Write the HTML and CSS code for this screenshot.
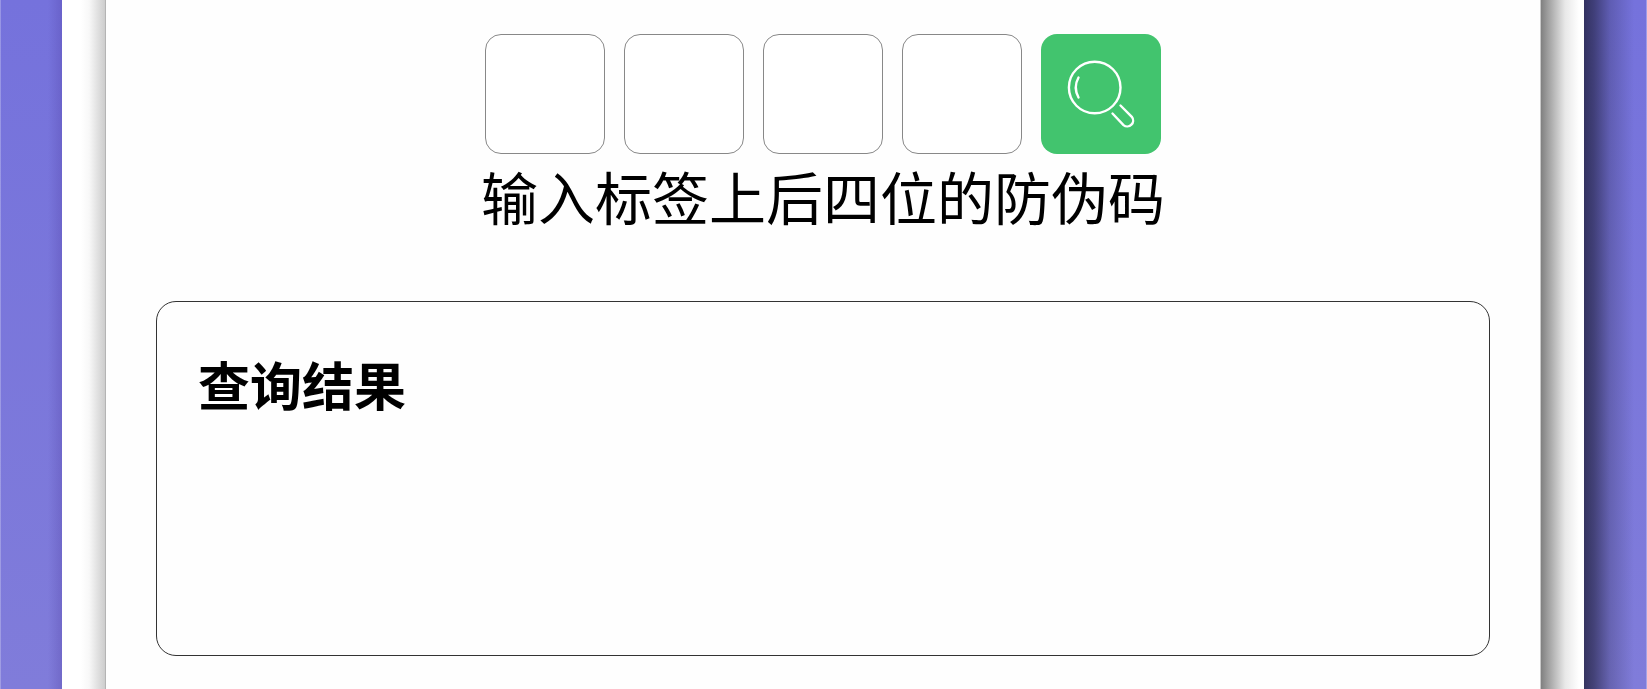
FILE: index.html
```
<!DOCTYPE html>
<html lang="zh-CN">
  <head>
    <meta charset="UTF-8" />
    <meta name="viewport" content="width=device-width, initial-scale=1.0" />
    <title>防伪码查询</title>
    <link rel="stylesheet" href="styles.css">
  </head>
  <body>
    <div class="sheet">
      <main class="page">
        <form class="code-form">
          <div class="code-row">
            <input class="code-box" type="text" maxlength="1" aria-labelledby="code-hint" />
            <input class="code-box" type="text" maxlength="1" aria-labelledby="code-hint" />
            <input class="code-box" type="text" maxlength="1" aria-labelledby="code-hint" />
            <input class="code-box" type="text" maxlength="1" aria-labelledby="code-hint" />
            <button class="search-button" type="submit" aria-label="查询">
              <svg class="search-icon" viewBox="0 0 120 120" aria-hidden="true">
                <circle cx="53.7" cy="53.5" r="25.8" />
                <path d="M37.5 43.5 Q32 53.5 37.5 63.5" />
                <path d="M79.5 71.5 L90.8 82.8 A5.9 5.9 0 0 1 82.5 91.1 L71.5 79.5" />
              </svg>
            </button>
          </div>
          <p class="code-hint" id="code-hint">输入标签上后四位的防伪码</p>
        </form>

        <!-- Result -->
        <section class="result">
          <h2 class="result-title">查询结果</h2>
        </section>
      </main>
    </div>
  </body>
</html>
```
FILE: styles.css
```
* {
  box-sizing: border-box;
}

body {
  margin: 0;
  padding: 0 63px 0 62px;
  font-family: "Noto Sans CJK SC", sans-serif;
  color: #000;
  /* shadows the sheet throws on the purple background */
  background:
    linear-gradient(to left, rgba(255, 255, 255, 0.3) 1px, transparent 1px),
    linear-gradient(to right, rgba(255, 255, 255, 0.25) 1px, transparent 1px),
    linear-gradient(to left, rgba(70, 50, 150, 0.25), transparent 14px) left / 62px 100% no-repeat,
    linear-gradient(to right, rgba(28, 28, 55, 0.75), rgba(28, 28, 55, 0.6) 10px, rgba(28, 28, 55, 0.25) 26px, transparent 50px) right / 63px 100% no-repeat,
    linear-gradient(to bottom, #7572dc, #807cda);
}

.sheet {
  min-height: 100vh;
  padding: 0 43px;
  background:
    linear-gradient(to left, #cdcdcd, #e2e2e2 8px, #f8f8f8 16px, transparent 24px) left / 43px 100% no-repeat,
    linear-gradient(to right, #808080, #b4b4b4 12px, #e8e8e8 24px, transparent 38px) right / 43px 100% no-repeat,
    #fff;
}

.page {
  min-height: 100vh;
  padding: 34px 50px 32px;
  border-left: 1px solid #b4b4b4;
  border-right: 1px solid #c8c8c8;
  background: #fefefe;
}

.code-row {
  display: flex;
  justify-content: center;
  gap: 19px;
}

.code-box,
.search-button {
  width: 120px;
  height: 120px;
  padding: 0;
  border-radius: 16px;
}

.code-box {
  border: 1px solid #888;
  background: #fff;
  font: inherit;
  font-size: 57px;
  text-align: center;
}

.search-button {
  border: none;
  background: #42c46e;
  cursor: pointer;
}

.search-icon {
  display: block;
  width: 100%;
  fill: none;
  stroke: #fff;
  stroke-width: 2.4;
  stroke-linecap: round;
}

.code-hint {
  margin: 0;
  font-size: 57px;
  line-height: 82px;
  text-align: center;
}

.result {
  min-height: 355px;
  margin-top: 65px;
  padding: 44px 41px;
  border: 1px solid #333;
  border-radius: 20px;
}

.result-title {
  margin: 0;
  font-size: 52px;
  font-weight: 700;
  line-height: 76px;
}
```
